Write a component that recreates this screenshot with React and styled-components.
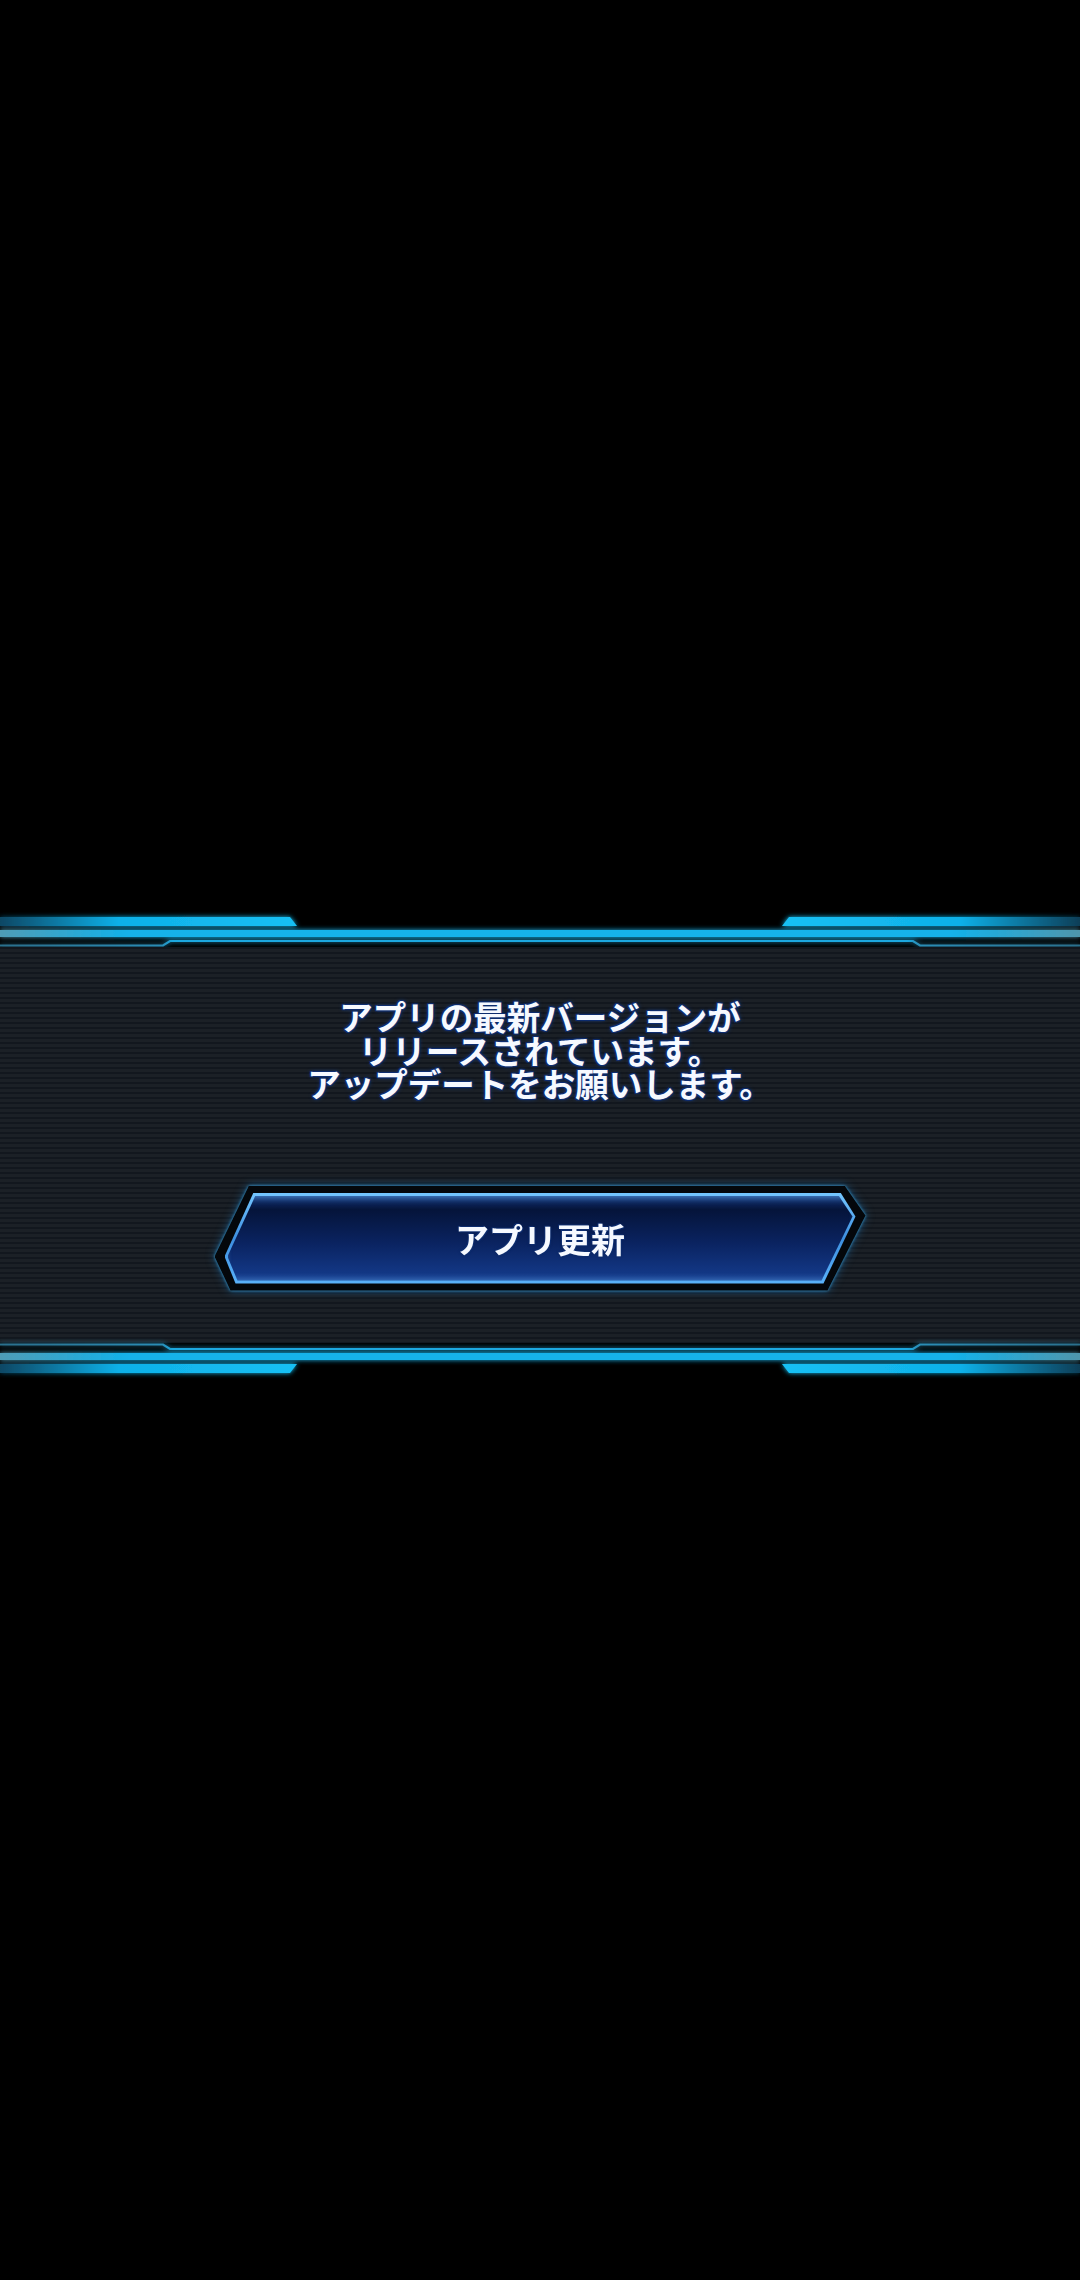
import React from 'react'
import styled, { createGlobalStyle } from 'styled-components'

const GlobalStyle = createGlobalStyle`
    html, body {
        margin: 0;
        padding: 0;
        background: #000;
    }
    #root {
        width: 1080px;
    }
`

const Screen = styled.div`
    width: 1080px;
    min-height: 2280px;
    background: #000;
    padding-top: 917px;
    box-sizing: border-box;
    display: flex;
    flex-direction: column;
    font-family: "Noto Sans CJK JP", "Noto Sans", sans-serif;
`

const Banner = styled.section`
    display: flex;
    flex-direction: column;
`

const TrimSvg = styled.svg`
    display: block;
    width: 1080px;
    height: 30px;
    overflow: visible;
    transform: ${props => props.$flip ? 'scaleY(-1)' : 'none'};
`

const Panel = styled.div`
    display: flex;
    flex-direction: column;
    align-items: center;
    padding: 52px 0 52px;
    gap: 86px;
    background: repeating-linear-gradient(
        180deg,
        #12171e 0px,
        #12171e 2.5px,
        #1b2026 2.5px,
        #1b2026 5px
    );
`

const Message = styled.div`
    display: flex;
    flex-direction: column;
    align-items: center;
`

const MessageLine = styled.span`
    display: block;
    height: 33.5px;
    color: #f6f9ff;
    font-size: 33.5px;
    line-height: 33.5px;
    font-weight: 700;
    white-space: nowrap;
    text-shadow:
        1px 1px 0 #0d2c6e,
        -1px -1px 0 #0d2c6e,
        1px -1px 0 #0d2c6e,
        -1px 1px 0 #0d2c6e,
        0 0 4px #103a8c;
`

const ButtonGlow = styled.div`
    filter: drop-shadow(0 0 1.5px #3aa0d8) drop-shadow(0 0 4px rgba(30, 120, 190, 0.55));
`

const ButtonFrame = styled.div`
    width: 651px;
    height: 105px;
    box-sizing: border-box;
    padding: 7px 10px;
    background: #04070b;
    clip-path: polygon(34.5px 0, calc(100% - 21px) 0, 100% 30px, calc(100% - 38px) 100%, 16px 100%, 0 calc(100% - 34px));
`

const ButtonEdge = styled.div`
    width: 100%;
    height: 100%;
    box-sizing: border-box;
    padding: 3px;
    background: linear-gradient(180deg, #74c6ff 0%, #3d8fe0 50%, #5ab2fa 100%);
    clip-path: polygon(29px 0, calc(100% - 15px) 0, 100% 24px, calc(100% - 32px) 100%, 11px 100%, 0 calc(100% - 27px));
`

const ButtonFill = styled.button`
    width: 100%;
    height: 100%;
    border: none;
    margin: 0;
    padding: 0;
    display: flex;
    align-items: center;
    justify-content: center;
    cursor: pointer;
    font-family: "Noto Sans CJK JP", "Noto Sans", sans-serif;
    font-size: 34px;
    font-weight: 700;
    color: #f6f9ff;
    text-shadow:
        1px 1px 0 #0d2c6e,
        -1px -1px 0 #0d2c6e,
        0 0 3px #0a2258;
    background: linear-gradient(180deg, #14357a 0%, #05143a 16%, #0a2360 55%, #153c8e 100%);
    box-shadow:
        inset 0 5px 6px -3px rgba(110, 190, 255, 0.55),
        inset 0 -5px 6px -3px rgba(110, 190, 255, 0.45);
    clip-path: polygon(28px 0, calc(100% - 14px) 0, 100% 21px, calc(100% - 31px) 100%, 10px 100%, 0 calc(100% - 24px));
`

const Trim = ({ flip, id }) => (
    <TrimSvg viewBox="0 0 1080 30" $flip={flip}>
        <defs>
            <linearGradient id={`barL${id}`} x1="0" x2="1" y1="0" y2="0">
                <stop offset="0" stopColor="#0a4764" />
                <stop offset="0.4" stopColor="#0fb0e8" />
                <stop offset="1" stopColor="#16c0f4" />
            </linearGradient>
            <linearGradient id={`barR${id}`} x1="0" x2="1" y1="0" y2="0">
                <stop offset="0" stopColor="#16c0f4" />
                <stop offset="0.6" stopColor="#0fb0e8" />
                <stop offset="1" stopColor="#0a3e57" />
            </linearGradient>
            <linearGradient id={`thick${id}`} x1="0" x2="1" y1="0" y2="0">
                <stop offset="0" stopColor="#4f9cb6" />
                <stop offset="0.12" stopColor="#12b2ea" />
                <stop offset="0.88" stopColor="#12b2ea" />
                <stop offset="1" stopColor="#4f96ac" />
            </linearGradient>
            <linearGradient id={`thin${id}`} x1="0" x2="1" y1="0" y2="0">
                <stop offset="0" stopColor="#2b6f8c" />
                <stop offset="0.15" stopColor="#2a8db6" />
                <stop offset="0.16" stopColor="#1aa8e0" />
                <stop offset="0.84" stopColor="#1aa8e0" />
                <stop offset="0.85" stopColor="#2a8db6" />
                <stop offset="1" stopColor="#2b6f8c" />
            </linearGradient>
            <filter id={`glow${id}`} x="-5%" y="-60%" width="110%" height="220%">
                <feGaussianBlur stdDeviation="2.5" result="blur" />
                <feMerge>
                    <feMergeNode in="blur" />
                    <feMergeNode in="SourceGraphic" />
                </feMerge>
            </filter>
        </defs>
        <g filter={`url(#glow${id})`}>
            <polygon points="0,0 290,0 297,9 0,9" fill={`url(#barL${id})`} />
            <polygon points="789,0 1080,0 1080,9 782,9" fill={`url(#barR${id})`} />
            <rect x="0" y="13" width="1080" height="7" fill={`url(#thick${id})`} />
            <polyline
                points="0,28.5 163,28.5 170,24 913,24 920,28.5 1080,28.5"
                fill="none"
                stroke={`url(#thin${id})`}
                strokeWidth="2.2"
            />
        </g>
    </TrimSvg>
)

const lines = [
    'アプリの最新バージョンが',
    'リリースされています。',
    'アップデートをお願いします。',
]

const App = () => (
    <Screen>
        <GlobalStyle />
        <Banner>
            <Trim id="top" />
            <Panel>
                <Message>
                    {lines.map(line => (
                        <MessageLine key={line}>{line}</MessageLine>
                    ))}
                </Message>
                <ButtonGlow>
                    <ButtonFrame>
                        <ButtonEdge>
                            <ButtonFill type="button">アプリ更新</ButtonFill>
                        </ButtonEdge>
                    </ButtonFrame>
                </ButtonGlow>
            </Panel>
            <Trim id="bottom" flip />
        </Banner>
    </Screen>
)

export default App
